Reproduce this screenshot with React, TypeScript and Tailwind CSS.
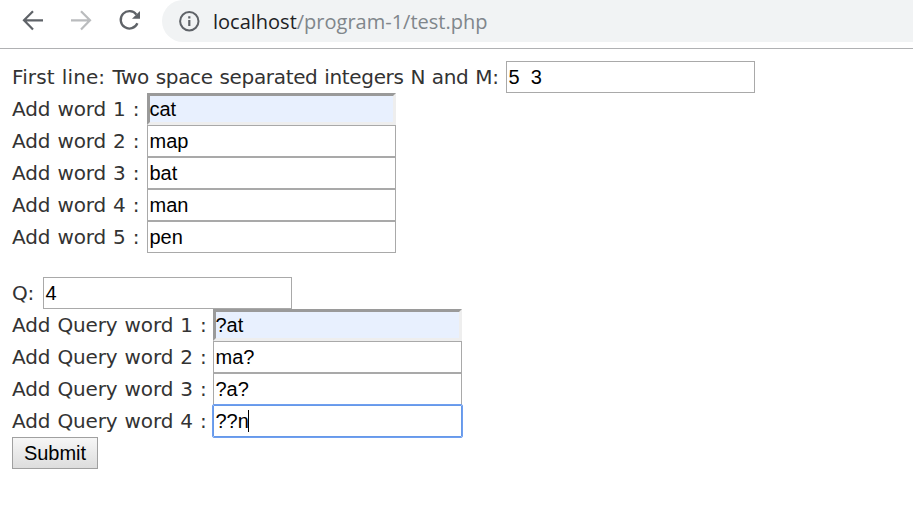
import React from "react";

type Look = "plain" | "filled" | "focused";

const looks: Record<Look, string> = {
  plain: "border border-[#a9a9a9] bg-white pl-[1.5px]",
  filled:
    "border-[3px] border-t-[#9a9a9a] border-l-[#9a9a9a] border-r-[#eeeeee] border-b-[#eeeeee] bg-[#e8f0fe]",
  focused:
    "border border-[#6699e8] bg-white pl-[1.5px] outline-1 outline-[#6f9ff0] rounded-[1px]",
};

function Field({ label, width, value, look = "plain" }: { label: React.ReactNode; width: string; value: string; look?: Look }) {
  return (
    <div className="flex h-8 items-center">
      <label className={`shrink-0 whitespace-pre text-[20px] leading-8 tracking-[-0.12px] text-[#333] [word-spacing:0.8px] ${width}`}>{label}</label>
      <div
        className={`flex h-8 w-[249px] shrink-0 items-center whitespace-pre font-['Liberation_Sans',Arial,sans-serif] text-[20px] leading-6 text-black ${looks[look]}`}
      >
        <span className={look === "filled" ? "-ml-[0.5px]" : ""}>{value}</span>
        {look === "focused" && <span className="-ml-[0.5px] h-[22px] w-px bg-black" />}
      </div>
    </div>
  );
}

const words = ["cat", "map", "bat", "man", "pen"];
const queries = ["?at", "ma?", "?a?", "??n"];

export default function App() {
  return (
    <div className="h-[505px] w-[913px] overflow-hidden bg-white">
      <header className="flex h-[49px] items-start border-b border-[#b0b1b3]">
        <div className="flex h-[42px] w-full items-center">
          <svg className="ml-[19px] h-7 w-7 shrink-0" viewBox="0 0 28 28" fill="none" stroke="#5f6368" strokeWidth="2.2">
            <path d="M24 13.3H5.5M14 4.2L5 13.3L14 22.4" />
          </svg>
          <svg className="ml-5 h-7 w-7 shrink-0" viewBox="0 0 28 28" fill="none" stroke="#babcbe" strokeWidth="2.2">
            <path d="M4 13.3H22.5M14 4.2L23 13.3L14 22.4" />
          </svg>
          <svg className="ml-5 h-7 w-7 shrink-0" viewBox="0 0 28 28" fill="none" stroke="#5f6368" strokeWidth="2.3">
            <path d="M21.4 7.6A8.7 8.7 0 1 0 22.4 16.3" />
            <path d="M25 3.9V11.8H17Z" fill="#5f6368" stroke="none" />
          </svg>
          <div className="ml-[19px] flex h-[42px] flex-1 items-center rounded-l-[21px] bg-[#f1f3f4] pl-[15px]">
            <svg className="h-6 w-6 shrink-0" viewBox="0 0 24 24" fill="none" stroke="#5f6368" strokeWidth="2">
              <circle cx="12.3" cy="12.3" r="9.2" />
              <path d="M12.3 11V17M12.3 7.3V9.4" strokeWidth="2.2" />
            </svg>
            <span className="ml-3 mt-0.5 whitespace-nowrap font-['Open_Sans','Noto_Sans',sans-serif] text-[20px] leading-10 text-[#80868b]">
              <span className="text-[#202124]">localhost</span>/program-1/test.php
            </span>
          </div>
        </div>
      </header>
      <main className="pl-3 pt-3 font-['DejaVu_Sans',Verdana,sans-serif]">
        <Field
          label={
            <>
              <span className="tracking-[0.1px]">First line: </span>
              <span className="tracking-[-0.34px]">Two space separated integers N and M:</span>
            </>
          }
          width="w-[494px]"
          value="5  3"
        />
        {words.map((word, i) => (
          <Field key={word} label={`Add word ${i + 1} :`} width="w-[135px]" value={word} look={i === 0 ? "filled" : "plain"} />
        ))}
        <div className="h-6" />
        <Field label="Q:" width="w-[31px]" value="4" />
        {queries.map((query, i) => (
          <Field
            key={query}
            label={`Add Query word ${i + 1} :`}
            width="w-[201px]"
            value={query}
            look={i === 0 ? "filled" : i === 3 ? "focused" : "plain"}
          />
        ))}
        <button className="block h-8 w-[86px] border border-[#a0a0a0] bg-linear-to-b from-[#f6f6f6] to-[#dddddd] text-center font-['Liberation_Sans',Arial,sans-serif] text-[20px] leading-[30px] text-black">
          Submit
        </button>
      </main>
    </div>
  );
}
